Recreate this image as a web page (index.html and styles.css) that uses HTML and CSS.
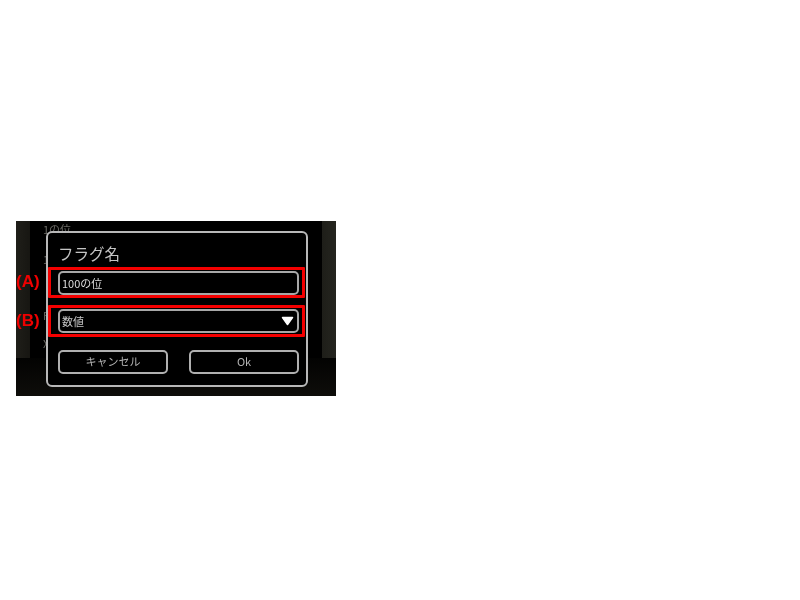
FILE: index.html
```html
<!DOCTYPE html>
<html lang="ja">
<head>
<meta charset="utf-8">
<title>フラグ名</title>
<link rel="stylesheet" href="styles.css">
</head>
<body>
<div class="screen">
  <div class="backdrop">
    <span class="bg-text bg-top">1の位</span>
    <span class="bg-text bg-a">1</span>
    <span class="bg-text bg-b">F</span>
    <span class="bg-text bg-c">X</span>
  </div>
  <div class="dialog">
    <div class="title">フラグ名</div>
    <div class="marked marked-a">
      <div class="field">100の位</div>
    </div>
    <div class="marked marked-b">
      <div class="field select">
        <span>数値</span>
        <svg class="arrow" width="13" height="10" viewBox="0 0 13 10"><path d="M1.5 1.5H11.5L6.5 8.5Z" fill="#fff" stroke="#fff" stroke-width="1.5" stroke-linejoin="round"/></svg>
      </div>
    </div>
    <div class="buttons">
      <div class="btn">キャンセル</div>
      <div class="btn">Ok</div>
    </div>
  </div>
  <span class="callout callout-a">(A)</span>
  <span class="callout callout-b">(B)</span>
</div>
</body>
</html>
```
FILE: styles.css
```css
html, body {
  margin: 0;
  background: #fff;
}
body {
  padding: 221px 0 0 16px;
  font-family: "Noto Sans CJK JP", "Liberation Sans", sans-serif;
}
.screen {
  position: relative;
  box-sizing: border-box;
  width: 320px;
  height: 175px;
  padding: 10px 28px 8px 30px;
  background: linear-gradient(90deg, #1f1e19 0, #171612 14px, #000 14px, #000 306px, #1e1e19 306px, #25251f 100%);
  overflow: hidden;
  filter: blur(0.35px);
}
.backdrop {
  position: absolute;
  left: 14px;
  top: 0;
  width: 292px;
  height: 137px;
  background: #000;
}
.screen::after {
  content: "";
  position: absolute;
  left: 0;
  right: 0;
  bottom: 0;
  height: 38px;
  background: linear-gradient(180deg, #030302, #0e0d0a);
}
.bg-text {
  position: absolute;
  font-size: 11px;
  line-height: 14px;
  color: #6a6964;
}
.bg-top { left: 13px; top: 1px; }
.bg-a { left: 13px; top: 31px; }
.bg-b { left: 13px; top: 87px; }
.bg-c { left: 13px; top: 115px; }
.dialog {
  position: relative;
  z-index: 1;
  box-sizing: border-box;
  width: 262px;
  height: 156px;
  background: #000;
  border: 2px solid #b8b8b8;
  border-radius: 6px;
}
.title {
  box-sizing: border-box;
  padding: 9px 0 0 10px;
  font-size: 15.5px;
  line-height: 22px;
  color: #c4c4c4;
  height: 34px;
}
.marked {
  box-sizing: border-box;
  width: 257px;
  padding: 0 3px 0 7px;
  border: 3px solid #f40000;
  border-radius: 1px;
  display: flex;
  align-items: center;
}
.marked-a { height: 31px; }
.marked-b {
  height: 32px;
  margin-top: 7px;
}
.field {
  box-sizing: border-box;
  flex: 1;
  height: 24px;
  padding: 0 3px 0 2px;
  display: flex;
  align-items: center;
  justify-content: space-between;
  border: 2px solid #a8a8a8;
  border-radius: 5px;
  font-size: 11px;
  color: #dcdcdc;
}
.marked-b .field {
  color: #c8c8c8;
}
.arrow {
  display: block;
}
.buttons {
  display: flex;
  justify-content: space-between;
  width: 241px;
  margin-top: 13px;
  margin-left: 10px;
}
.btn {
  box-sizing: border-box;
  width: 110px;
  height: 24px;
  padding-bottom: 2px;
  display: flex;
  align-items: center;
  justify-content: center;
  border: 2px solid #b0b0b0;
  border-radius: 5px;
  font-size: 11px;
  color: #b4b4b4;
}
.callout {
  position: absolute;
  z-index: 2;
  left: 0;
  font-family: "Liberation Sans", sans-serif;
  font-size: 17px;
  line-height: 18px;
  font-weight: 700;
  color: #f00000;
}
.callout-a { top: 52px; }
.callout-b { top: 91px; }
```
